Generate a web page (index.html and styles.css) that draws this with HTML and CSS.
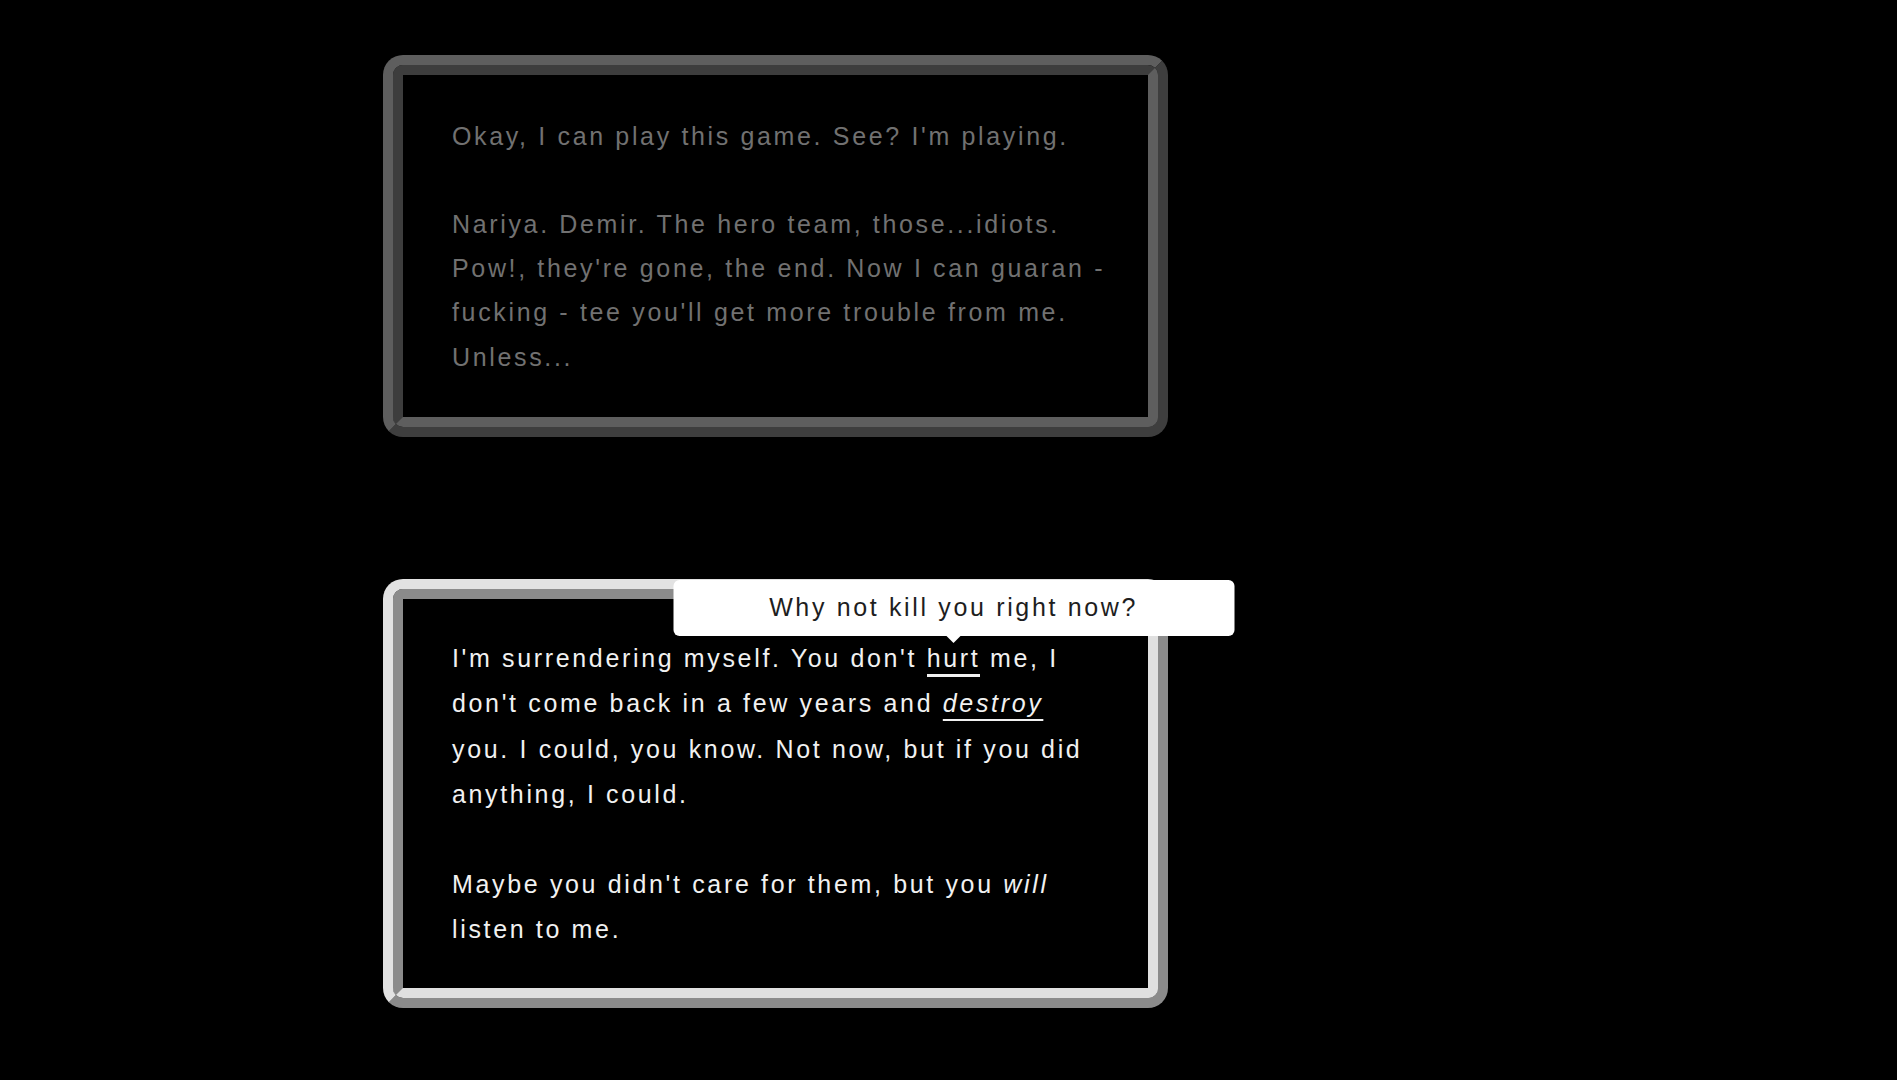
FILE: index.html
```html
<!DOCTYPE html>
<html lang="en">
<head>
<meta charset="utf-8">
<title>Dialogue</title>
<link rel="stylesheet" href="styles.css">
</head>
<body>
<main class="log">
  <section class="card card--dim">
    <div class="card__inner">
      <div class="card__text">
        <p>Okay, I can play this game. See? I'm playing.</p>
        <p>Nariya. Demir. The hero team, those...idiots. Pow!, they're gone, the end. Now I can guaran - fucking - tee you'll get more trouble from me. Unless...</p>
      </div>
    </div>
  </section>
  <section class="card card--bright">
    <div class="card__inner">
      <div class="card__text">
        <p>I'm surrendering myself. You don't <span class="hint">hurt<span class="tooltip">Why not kill you right now?</span></span> me, I don't come back in a few years and <em class="stress">destroy</em> you. I could, you know. Not now, but if you did anything, I could.</p>
        <p>Maybe you didn't care for them, but you <em>will</em> listen to me.</p>
      </div>
    </div>
  </section>
</main>
</body>
</html>
```

FILE: styles.css
```css
html, body {
  margin: 0;
  padding: 0;
  background: #000;
}

body {
  font-family: "Liberation Sans", Arial, sans-serif;
  font-size: 25px;
  letter-spacing: 2.65px;
  min-height: 1080px;
}

.log {
  display: flex;
  flex-direction: column;
  align-items: flex-start;
  gap: 142px;
  padding: 55px 0 0 383px;
}

.card {
  width: 785px;
  box-sizing: border-box;
  border: 10px solid;
  border-radius: 20px;
}

.card__inner {
  border: 10px solid;
  border-radius: 10px;
  background: #000;
}

.card__text {
  padding: 38.5px 40px 38px 49px;
}

.card__text p {
  margin: 0;
}

.card__text p + p {
  margin-top: var(--lh);
}

.card--dim {
  --lh: 44.2px;
  border-color: #5e5e5e #3e3e3e #3e3e3e #5e5e5e;
  color: #717171;
  line-height: 44.2px;
}

.card--dim .card__inner {
  border-color: #3d3d3d #5e5e5e #5e5e5e #3d3d3d;
}

.card--bright {
  --lh: 45.2px;
  border-color: #e2e2e2 #8b8b8b #8b8b8b #e2e2e2;
  color: #f1f1f1;
  line-height: 45.2px;
}

.card--bright .card__inner {
  border-color: #8b8b8b #e0e0e0 #e0e0e0 #8b8b8b;
}

.card--bright .card__text {
  padding: 37.5px 40px 35.1px 49px;
}

.hint {
  position: relative;
  border-bottom: 3px solid #f1f1f1;
  padding-bottom: 2px;
}

.stress {
  text-decoration: underline;
  text-decoration-thickness: 2px;
  text-underline-offset: 7px;
}

.tooltip {
  position: absolute;
  left: 50%;
  bottom: 100%;
  margin-bottom: 8.5px;
  transform: translateX(-50%);
  width: 561px;
  height: 56px;
  display: flex;
  align-items: center;
  justify-content: center;
  background: #fff;
  color: #1e1e1e;
  border-radius: 6px;
  white-space: nowrap;
  line-height: 1;
  font-style: normal;
  z-index: 2;
}

.tooltip::after {
  content: "";
  position: absolute;
  left: 50%;
  top: 100%;
  margin-left: -7px;
  border-left: 7px solid transparent;
  border-right: 7px solid transparent;
  border-top: 7px solid #fff;
}
```
